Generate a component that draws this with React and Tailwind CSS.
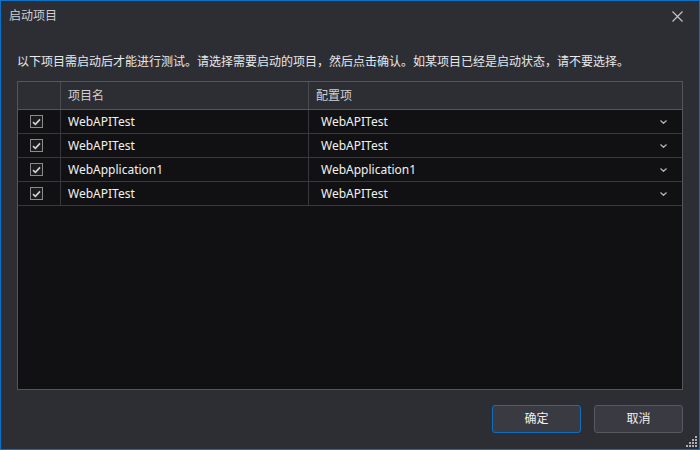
import React from "react";

const rows = [
  { name: "WebAPITest", config: "WebAPITest" },
  { name: "WebAPITest", config: "WebAPITest" },
  { name: "WebApplication1", config: "WebApplication1" },
  { name: "WebAPITest", config: "WebAPITest" },
];

const font = { fontFamily: '"Noto Sans", "Noto Sans CJK SC", sans-serif' };

function Check() {
  return (
    <span className="flex items-center justify-center w-[13px] h-[13px] border border-[#8a8a8e] bg-[#1b1b1e]">
      <svg width="9" height="8" viewBox="0 0 9 8">
        <path d="M1 4.2 L3.4 6.4 L8 1.4" fill="none" stroke="#d4d4d4" strokeWidth="1.6" />
      </svg>
    </span>
  );
}

function Chevron() {
  return (
    <svg width="7" height="4" viewBox="0 0 7 4" className="mr-[15px]">
      <path d="M0.5 0.5 L3.5 3.3 L6.5 0.5" fill="none" stroke="#b8b8bc" strokeWidth="1.2" />
    </svg>
  );
}

function Grip() {
  const dots = [
    [9, 0], [6, 3], [9, 3], [3, 6], [6, 6], [9, 6], [0, 9], [3, 9], [6, 9], [9, 9],
  ];
  return (
    <svg width="11" height="11" viewBox="0 0 11 11" className="absolute right-[2px] bottom-[2px]">
      {dots.map(([x, y], i) => (
        <rect key={i} x={x} y={y} width="2" height="2" fill="#b0b0b4" />
      ))}
    </svg>
  );
}

export default function App() {
  return (
    <div
      className="relative w-[700px] h-[450px] bg-[#2d2e33] border border-[#0a72c8] flex flex-col text-[12px] text-[#f1f1f1]"
      style={font}
    >
      <div className="h-[30px] flex items-center justify-between pl-[8px] pr-[16px]">
        <span className="text-[#cfcfd2] text-[12px]">启动项目</span>
        <svg width="11" height="11" viewBox="0 0 11 11">
          <path d="M0.5 0.5 L10.5 10.5 M10.5 0.5 L0.5 10.5" stroke="#c8c8cc" strokeWidth="1.1" />
        </svg>
      </div>

      <div className="flex-1 flex flex-col px-[16px] pb-[16px]">
        <p className="mt-[23px] leading-[16px] text-[#e8e8ea]">
          以下项目需启动后才能进行测试。请选择需要启动的项目，然后点击确认。如某项目已经是启动状态，请不要选择。
        </p>

        <div className="mt-[11px] h-[309px] border border-[#55565b] bg-[#111113] flex flex-col">
          <div className="grid grid-cols-[43px_248px_1fr] h-[28px] bg-[#2d2e33] border-b border-[#55565b] text-[#d0d0d3]">
            <div className="border-r border-[#4a4b50]" />
            <div className="border-r border-[#4a4b50] flex items-center pl-[7px]">项目名</div>
            <div className="flex items-center pl-[7px]">配置项</div>
          </div>
          {rows.map((r, i) => (
            <div
              key={i}
              className="grid grid-cols-[43px_248px_1fr] h-[24px] border-b border-[#38393d]"
            >
              <div className="border-r border-[#38393d] flex items-center pl-[12px]">
                <Check />
              </div>
              <div className="border-r border-[#38393d] flex items-center pl-[7px]">{r.name}</div>
              <div className="flex items-center justify-between pl-[12px]">
                <span>{r.config}</span>
                <Chevron />
              </div>
            </div>
          ))}
        </div>

        <div className="mt-[15px] flex justify-end gap-[13px]">
          <button className="w-[89px] h-[28px] rounded-[3px] bg-[#3a3b42] border border-[#0e6fc0] text-[#f1f1f1]">
            确定
          </button>
          <button className="w-[89px] h-[28px] rounded-[3px] bg-[#3a3b42] border border-[#58595f] text-[#f1f1f1]">
            取消
          </button>
        </div>
      </div>
      <Grip />
    </div>
  );
}
